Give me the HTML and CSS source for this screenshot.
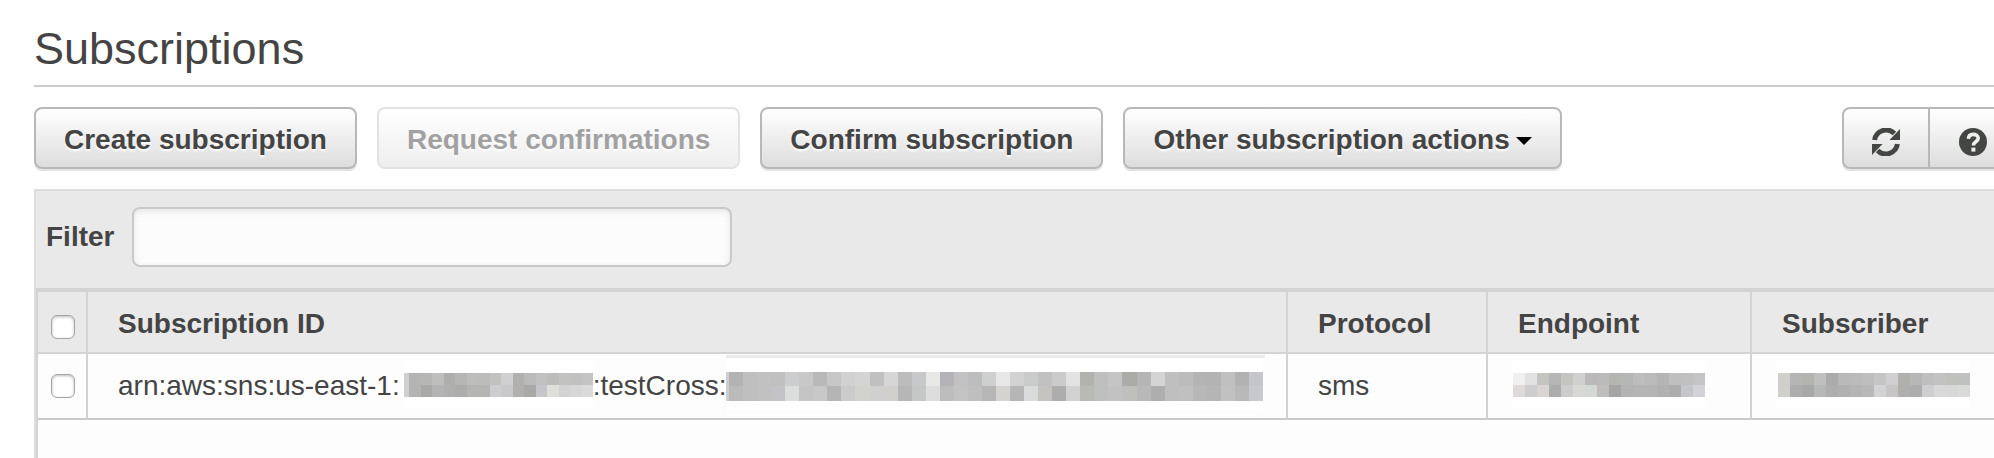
FILE: index.html
```html
<!DOCTYPE html>
<html lang="en">
<head>
<meta charset="utf-8">
<title>Subscriptions</title>
<link rel="stylesheet" href="styles.css">
</head>
<body>
<main class="page">
  <h1 class="title">Subscriptions</h1>

  <div class="toolbar">
    <button class="btn" type="button">Create subscription</button>
    <button class="btn" type="button" disabled>Request confirmations</button>
    <button class="btn" type="button">Confirm subscription</button>
    <button class="btn" type="button">Other subscription actions<span class="caret"></span></button>
    <div class="btn-group">
      <button class="btn btn-icon" type="button" aria-label="Refresh">
        <svg class="icon" viewBox="0 0 28 28" aria-hidden="true">
          <path d="M2.600 12A11.600 11.600 0 0 1 22.400 5.600" fill="none" stroke="#444644" stroke-width="5"/>
          <path d="M28 1V12H17.500Z" fill="#444644"/>
          <path d="M25.400 16A11.600 11.600 0 0 1 5.600 22.400" fill="none" stroke="#444644" stroke-width="5"/>
          <path d="M0 27V16H10.500Z" fill="#444644"/>
        </svg>
      </button>
      <button class="btn btn-icon" type="button" aria-label="Help">
        <svg class="icon" viewBox="0 0 28 28" aria-hidden="true">
          <circle cx="14" cy="14" r="14" fill="#444644"/>
          <path d="M9.400 10.800C9.600 7.600 11.600 6.400 14.200 6.400C17 6.400 19.200 7.800 19.200 10.300C19.200 13.600 14.500 13.400 14.500 17.400" fill="none" stroke="#eee" stroke-width="3.600"/>
          <rect x="12.400" y="19.600" width="4" height="4" fill="#eee"/>
        </svg>
      </button>
    </div>
  </div>

  <section class="panel">
    <div class="filter">
      <label for="filter">Filter</label>
      <input class="filter-input" id="filter" type="text">
    </div>
    <table class="grid">
      <colgroup>
        <col class="col-check"><col class="col-id"><col class="col-protocol"><col class="col-endpoint"><col>
      </colgroup>
      <thead>
        <tr>
          <th class="check"><input type="checkbox" aria-label="Select all"></th>
          <th>Subscription ID</th>
          <th>Protocol</th>
          <th>Endpoint</th>
          <th>Subscriber</th>
        </tr>
      </thead>
      <tbody>
        <tr>
          <td class="check"><input type="checkbox" aria-label="Select subscription"></td>
          <td>
            <div class="arn">
              <span>arn:aws:sns:us-east-1:</span>
              <svg class="mask" width="189" height="62" data-x="5" data-y="18" data-w="184" data-h="24"
                data-top="b4b4b3 b6b6b5 bebebd aeaeac b6b6b4 bdbdbb bcbcbb c1c1c0 d0d0d2 b0b0ae bababa c1c1c1 bcbcbb c2c2c1 c1c1c0 c4c4c4"
                data-bottom="b4b4b3 a9a9a8 b4b4b4 b0b0af acadac b5b5b4 b5b5b4 cdcdd0 c9c9cc b1b0ae a9a9a8 c6c6ca dedfdb d3d3d4 d7d7d7 dadada"></svg>
              <span>:testCross:</span>
              <svg class="mask" width="537" height="62" data-x="3" data-y="17" data-w="534" data-h="29" data-line="true"
                data-top="b3b3b3 bfbfbf c1c1c1 bfc0bf cccdcf c8c8c8 b9b9b9 c7c7c7 d1d1d1 d4d4d4 c0c0c0 d6d6d6 bcbcbc c7c8ca e8e8e6 b5b3b7 c2c2c2 bdbdbf ced0cf e7e7e7 d2d2d2 cacccb c1c1c1 cbcbcb e3e3e3 b2b2af bfbfbf c5c5c5 ababa8 b5b5b5 d4d4d4 bfbfbf bcbcbc b4b4b4 b3b3b3 c0c0c0 b2b2b2 c5c6c9"
                data-bottom="bbbbb9 bfbfbf c1c1c1 c3c3c7 dcdedd c5c5c5 c8c8c8 b5b5b5 cbcbcb d2d2cf d0d0d0 d1d0cd b6b6b6 c5c7c7 dddddd bdbdbd c3c3c3 bfbfc0 b7b7b7 d4d3d0 b6b6b6 d9dcda c5c3c0 adadad d2d2d2 b9b9b6 bec0bf c2c2c2 bfbfbb b9b9b9 aeaeae bfbfbf c0c0c0 b8b8b8 b5b5b5 c1c1c1 b9b9b9 c8c9cd"></svg>
            </div>
          </td>
          <td>sms</td>
          <td class="masked">
            <svg class="mask" width="208" height="62" data-x="1" data-y="18" data-w="192" data-h="24"
              data-top="f0f0f0 e2e2e2 c4c4c1 b6b6b6 c4c4c1 d0d0d0 bab8b8 bbbbbb b4b4b1 b4b7b5 bdbdbd bababa b3b6b4 bfbfbf c0c0c0 c5c5c8"
              data-bottom="dedad9 cdcdd0 dad5d3 adadad cdcdcd d8d8d4 d4d8d5 bebdbb a5a5a5 b3b3b3 b5b5b5 b5b5b5 b1b1b1 adadad c5c6c9 d3d3d7"></svg>
          </td>
          <td class="masked">
            <svg class="mask" width="208" height="62" data-x="2" data-y="18" data-w="192" data-h="24"
              data-top="d0cfcc b5b5b5 b3b3b0 bfbfbf ababab b9b9b9 bbbbbb bebebe c5c5c5 d2cfd2 b1b0ad b7b7b7 bfbfbf c2c2c2 c0c0bd bfc1c0"
              data-bottom="d0cfcc adadad a8a8a8 b6b8b7 aeaeae b0b0b0 b4b4b4 b8b8b8 d3d3d6 c8c5c7 b1aeae adadad cfcfd2 d9d9d9 d8d8d8 d9dbd9"></svg>
          </td>
        </tr>
      </tbody>
    </table>
  </section>
</main>
<script src="mask.js"></script>
</body>
</html>
```

FILE: styles.css
```css
* {
  box-sizing: border-box;
}

body {
  margin: 0;
  overflow: hidden;
  background: #fff;
  color: #444;
  font: 28px/32px "Liberation Sans", Arial, sans-serif;
}

.page {
  display: flex;
  flex-direction: column;
  min-height: 100vh;
  padding: 21px 0 0 34px;
}

.title {
  margin: 0;
  padding-bottom: 9px;
  border-bottom: 2px solid #ccc;
  font-size: 45px;
  font-weight: 400;
  line-height: 55px;
}

.toolbar {
  display: flex;
  gap: 20px;
  padding: 20px 0;
}

.btn {
  height: 62px;
  padding: 3px 28px 0;
  border: 2px solid #b8b8b8;
  border-radius: 8px;
  background: linear-gradient(#fff, #ddd);
  box-shadow: 0 2px 0 #e2e2e2;
  color: #444;
  font: bold 28px/32px "Liberation Sans", Arial, sans-serif;
  text-shadow: 0 2px 2px #fff;
  white-space: nowrap;
}

.btn:disabled {
  border-color: #e2e2e2;
  background: linear-gradient(#fff, #eee);
  box-shadow: none;
  color: #a1a1a1;
}

.caret {
  display: inline-block;
  margin-left: 6px;
  border: 8px solid transparent;
  border-top-color: #000;
  border-bottom: 0;
  vertical-align: middle;
}

/* The group runs past the right edge of the viewport. */
.btn-group {
  display: flex;
  margin: 0 -24px 0 auto;
}

.btn-icon {
  width: 88px;
  padding: 8px 0 0;
}

.btn-icon:first-child {
  border-radius: 8px 0 0 8px;
}

.btn-icon:last-child {
  border-left: 0;
  border-radius: 0 8px 8px 0;
}

.icon {
  display: block;
  width: 28px;
  height: 28px;
  margin: 0 auto;
}

.panel {
  display: flex;
  flex: 1;
  flex-direction: column;
  border: solid #ddd;
  border-width: 2px 0 0 2px;
  background: #e9e9e9;
}

.panel::after {
  content: "";
  flex: 1;
  border-left: 2px solid #d3d3d3;
  background: #fdfdfd;
}

.filter {
  display: flex;
  align-items: center;
  gap: 18px;
  padding: 16px 10px 21px;
  font-weight: bold;
}

.filter-input {
  width: 600px;
  height: 60px;
  padding: 0 16px;
  border: 2px solid #c9c9c9;
  border-radius: 8px;
  background: #fcfcfc;
  box-shadow: inset 0 2px 6px #e4e4e4;
  color: inherit;
  font: inherit;
}

.grid {
  width: 100%;
  table-layout: fixed;
  border: solid #d3d3d3;
  border-width: 4px 0 0 2px;
  border-spacing: 0;
  background: #fdfdfd;
}

.col-check { width: 50px; }
.col-id { width: 1200px; }
.col-protocol { width: 200px; }
.col-endpoint { width: 264px; }

.grid th,
.grid td {
  padding: 0 0 0 30px;
  border-right: 2px solid #d3d3d3;
  border-bottom: 2px solid #d3d3d3;
  text-align: left;
  vertical-align: middle;
  white-space: nowrap;
}

.grid th {
  height: 62px;
  padding-top: 4px;
  background: #e9e9e9;
}

.grid td {
  height: 66px;
  border-bottom-color: #c9c9c9;
}

.grid th:last-child,
.grid td:last-child {
  border-right: 0;
}

.grid .check {
  padding-left: 13px;
}

.grid th.check {
  padding-top: 10px;
}

.grid .masked {
  padding-left: 24px;
}

.check input {
  appearance: none;
  display: block;
  width: 24px;
  height: 24px;
  margin: 0;
  border: 1px solid #a4a4a4;
  border-radius: 6px;
  background: #fff;
  box-shadow: inset 0 1px 3px #bbb;
}

.arn {
  display: flex;
  align-items: center;
}

.arn .mask:nth-child(2) {
  margin-left: 4px;
}

.mask {
  display: block;
  flex: none;
  overflow: visible;
}
```

FILE: mask.js
```js
// Fills each mask with two rows of colour cells that hide the private value.
const NS = "http://www.w3.org/2000/svg";

function addRect(svg, x, y, width, height, fill) {
  const rect = document.createElementNS(NS, "rect");
  Object.entries({ x, y, width, height, fill }).forEach(([k, v]) => rect.setAttribute(k, v));
  svg.append(rect);
}

document.querySelectorAll(".mask").forEach((svg) => {
  const x = Number(svg.dataset.x);
  const y = Number(svg.dataset.y);
  const w = Number(svg.dataset.w);
  const h = Number(svg.dataset.h);
  const half = Math.floor(h / 2);

  addRect(svg, 0, y - 12, x + w, h + 22, "#fff");
  if (svg.dataset.line) {
    addRect(svg, 0, 0, x + w + 2, 3, "#ebebeb");
  }
  if (x > 2) {
    addRect(svg, 0, y, x, h, "#cfcfcf");
  }
  [svg.dataset.top, svg.dataset.bottom].forEach((row, r) => {
    const cells = row.split(" ");
    cells.forEach((color, i) => {
      const left = Math.round((i * w) / cells.length);
      const right = Math.round(((i + 1) * w) / cells.length);
      addRect(svg, x + left, y + r * half, right - left, r ? h - half : half, "#" + color);
    });
  });
});
```
